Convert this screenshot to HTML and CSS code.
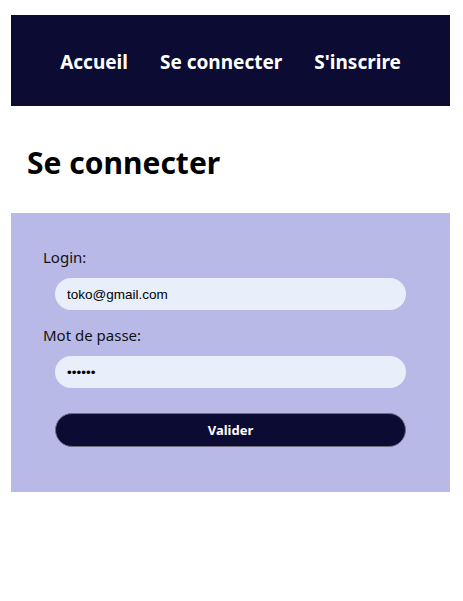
FILE: index.html
```html
<!DOCTYPE html>
<html lang="fr">
<head>
<meta charset="utf-8">
<title>Se connecter</title>
<link rel="stylesheet" href="styles.css">
</head>
<body>
<nav class="nav">
  <a class="nav-link" href="#">Accueil</a>
  <a class="nav-link" href="#">Se connecter</a>
  <a class="nav-link" href="#">S'inscrire</a>
</nav>
<h1 class="title">Se connecter</h1>
<form class="form">
  <label class="label" for="login">Login:</label>
  <input class="field" id="login" type="text" value="toko@gmail.com">
  <label class="label" for="pwd">Mot de passe:</label>
  <input class="field" id="pwd" type="password" value="123456">
  <button class="submit" type="button">Valider</button>
</form>
</body>
</html>
```
FILE: styles.css
```css
* { box-sizing: border-box; }
body {
  margin: 0;
  padding: 15px 13px 0 11px;
  font-family: "Noto Sans", "Open Sans", sans-serif;
  background: #fff;
}
.nav {
  height: 91px;
  background: #0b0b33;
  display: flex;
  justify-content: center;
  align-items: center;
  gap: 32px;
  padding-top: 3px;
}
.nav-link {
  color: #fff;
  text-decoration: none;
  font-weight: 700;
  font-size: 19px;
}
.title {
  margin: 0;
  padding: 35px 0 28px 16px;
  font-size: 30px;
  font-weight: 700;
  line-height: 44px;
  color: #000;
}
.form {
  background: #b9b9e8;
  padding: 33px 44px 44px 32px;
  display: flex;
  flex-direction: column;
  height: 279px;
}
.label {
  font-size: 15px;
  line-height: 22px;
  color: #111;
}
.field {
  margin: 10px 0 14px 12px;
  height: 32px;
  border: none;
  border-radius: 16px;
  background: #e8eefa;
  padding: 0 12px;
  font-family: "Liberation Sans", Arial, sans-serif;
  font-size: 13.5px;
  color: #000;
  outline: none;
}
.submit {
  margin: 11px 0 0 12px;
  height: 34px;
  border: 1px solid #6e6e80;
  border-radius: 17px;
  background: #0b0b33;
  color: #fff;
  font-family: "Noto Sans", sans-serif;
  font-weight: 700;
  font-size: 13px;
}
```
